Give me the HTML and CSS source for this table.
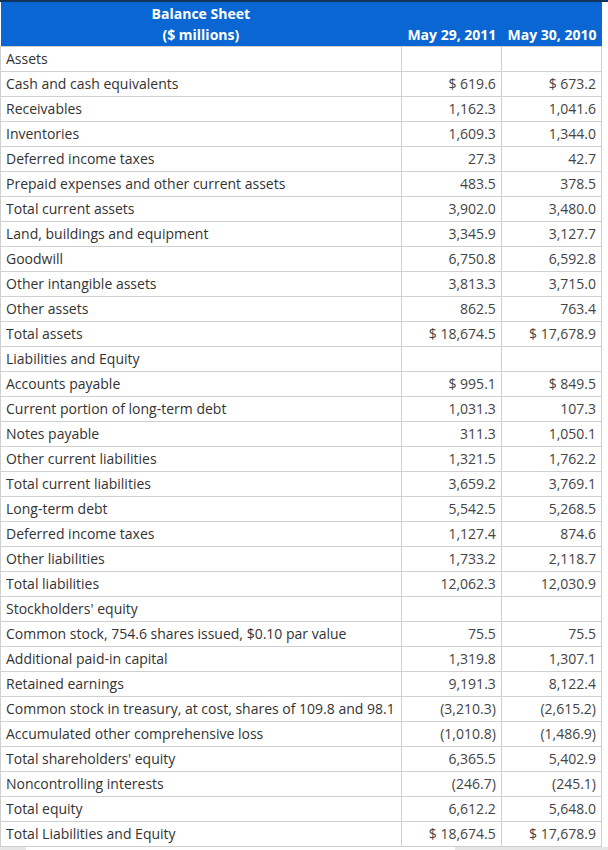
FILE: index.html
```html
<!DOCTYPE html>
<html>
<head>
<meta charset="utf-8">
<link rel="stylesheet" href="styles.css">
</head>
<body>
<div class="wrap">
<table class="bs">
<thead>
<tr>
<th class="title">Balance Sheet<br>($ millions)</th>
<th class="date">May 29, 2011</th>
<th class="date">May 30, 2010</th>
</tr>
</thead>
<tbody>
<tr><td>Assets</td><td></td><td></td></tr>
<tr><td>Cash and cash equivalents</td><td>$ 619.6</td><td>$ 673.2</td></tr>
<tr><td>Receivables</td><td>1,162.3</td><td>1,041.6</td></tr>
<tr><td>Inventories</td><td>1,609.3</td><td>1,344.0</td></tr>
<tr><td>Deferred income taxes</td><td>27.3</td><td>42.7</td></tr>
<tr><td>Prepaid expenses and other current assets</td><td>483.5</td><td>378.5</td></tr>
<tr class="total"><td>Total current assets</td><td>3,902.0</td><td>3,480.0</td></tr>
<tr><td>Land, buildings and equipment</td><td>3,345.9</td><td>3,127.7</td></tr>
<tr><td>Goodwill</td><td>6,750.8</td><td>6,592.8</td></tr>
<tr><td>Other intangible assets</td><td>3,813.3</td><td>3,715.0</td></tr>
<tr><td>Other assets</td><td>862.5</td><td>763.4</td></tr>
<tr class="total"><td>Total assets</td><td>$ 18,674.5</td><td>$ 17,678.9</td></tr>
<tr><td>Liabilities and Equity</td><td></td><td></td></tr>
<tr><td>Accounts payable</td><td>$ 995.1</td><td>$ 849.5</td></tr>
<tr><td>Current portion of long-term debt</td><td>1,031.3</td><td>107.3</td></tr>
<tr><td>Notes payable</td><td>311.3</td><td>1,050.1</td></tr>
<tr><td>Other current liabilities</td><td>1,321.5</td><td>1,762.2</td></tr>
<tr class="total"><td>Total current liabilities</td><td>3,659.2</td><td>3,769.1</td></tr>
<tr><td>Long-term debt</td><td>5,542.5</td><td>5,268.5</td></tr>
<tr><td>Deferred income taxes</td><td>1,127.4</td><td>874.6</td></tr>
<tr><td>Other liabilities</td><td>1,733.2</td><td>2,118.7</td></tr>
<tr class="total"><td>Total liabilities</td><td>12,062.3</td><td>12,030.9</td></tr>
<tr><td>Stockholders' equity</td><td></td><td></td></tr>
<tr><td>Common stock, 754.6 shares issued, $0.10 par value</td><td>75.5</td><td>75.5</td></tr>
<tr><td>Additional paid-in capital</td><td>1,319.8</td><td>1,307.1</td></tr>
<tr><td>Retained earnings</td><td>9,191.3</td><td>8,122.4</td></tr>
<tr><td>Common stock in treasury, at cost, shares of 109.8 and 98.1</td><td>(3,210.3)</td><td>(2,615.2)</td></tr>
<tr><td>Accumulated other comprehensive loss</td><td>(1,010.8)</td><td>(1,486.9)</td></tr>
<tr class="total"><td>Total shareholders' equity</td><td>6,365.5</td><td>5,402.9</td></tr>
<tr><td>Noncontrolling interests</td><td>(246.7)</td><td>(245.1)</td></tr>
<tr class="total"><td>Total equity</td><td>6,612.2</td><td>5,648.0</td></tr>
<tr class="total"><td>Total Liabilities and Equity</td><td>$ 18,674.5</td><td>$ 17,678.9</td></tr>
</tbody>
</table>
<div class="hscroll"><div class="thumb"></div></div>
</div>
</body>
</html>
```

FILE: styles.css
```css
html, body {
  margin: 0;
  padding: 0;
  background: #fff;
}
body {
  font-family: "Open Sans", "Liberation Sans", sans-serif;
  font-size: 14px;
  color: #333;
}
.wrap {
  width: 608px;
  border-top: 2px solid #13335f;
}
.bs {
  border-collapse: collapse;
  width: 602px;
  table-layout: fixed;
}
.bs thead th {
  background: #0a66d3;
  color: #fff;
  font-weight: bold;
  line-height: 21px;
  padding: 1px 5px 1px 5px;
  vertical-align: bottom;
}
.bs th.title {
  width: 390px;
  text-align: center;
}
.bs th.date {
  width: 90px;
  text-align: right;
  white-space: nowrap;
}
.bs td {
  border: 1px solid #cfcfcf;
  height: 24px;
  padding: 0 5px;
  line-height: 18px;
  white-space: nowrap;
}
.bs td + td {
  text-align: right;
  color: #444;
}
.bs tr.total td + td {
  border-top: 1px solid #000;
}
.hscroll {
  height: 4px;
  background: #e6e6e6;
  position: relative;
}
.thumb {
  position: absolute;
  left: 26px;
  width: 429px;
  top: 0;
  bottom: 0;
  background: #fff;
}
```
